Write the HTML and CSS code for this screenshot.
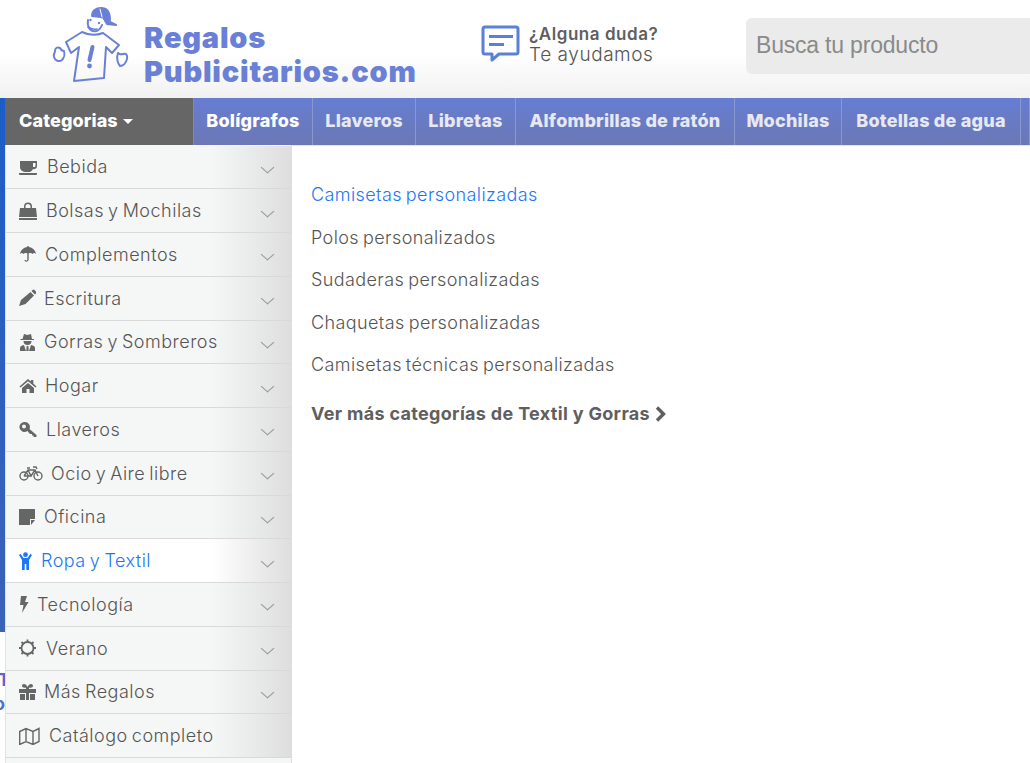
FILE: index.html
```html
<!DOCTYPE html>
<html lang="es">
<head>
<meta charset="utf-8">
<title>Regalos Publicitarios</title>
<link rel="stylesheet" href="styles.css">
</head>
<body>
<header class="top">
  <a class="logo">
    <svg class="logo-mark" width="95" height="90" viewBox="0 0 95 90" fill="none" stroke="#6a80d6" stroke-width="2" stroke-linecap="round" stroke-linejoin="round">
      <path d="M52 16c0-5 4-8 9-8 6 0 9 4 9 12l-9-3z" fill="#6a80d6"/>
      <path d="M64 19l12 6-9-1z" fill="#6a80d6"/>
      <path d="M60 9l2 8" stroke="#fff" stroke-width="1"/>
      <path d="M48 20c-1 5 1 10 5 11 4 1 7-1 9-6"/>
      <circle cx="50.500" cy="20" r="1.200" fill="#6a80d6" stroke="none"/>
      <circle cx="59" cy="23" r="1.200" fill="#6a80d6" stroke="none"/>
      <path d="M48 27q4 3 9 2" stroke-width="1.600"/>
      <path d="M26 42L42 32Q52 37 63 33L79 45 72 53 66 47 64 78 34 81 39 47 31 53Z"/>
      <path d="M52.500 47l-3 13" stroke-width="4"/>
      <circle cx="49.500" cy="66" r="2.400" fill="#6a80d6" stroke="none"/>
      <path d="M20 48c-3-1-5 0-5 3 0 2-2 3-1 6 1 4 5 5 8 3 2-2 3-6 2-9-1 0-3-1-4-3z"/>
      <path d="M78 53c2 1 3 2 5 1 3-1 5 1 4 5-1 4-4 7-7 7-2-2-4-8-2-13z"/>
    </svg>
    <span class="logo-text">Regalos<br>Publicitarios.com</span>
  </a>
  <div class="help">
    <svg width="40" height="38" viewBox="0 0 40 38" fill="none">
      <path d="M4 2h31a2 2 0 0 1 2 2v23a2 2 0 0 1-2 2H18l-7 6v-6H4a2 2 0 0 1-2-2V4a2 2 0 0 1 2-2z" stroke="#5b80d8" stroke-width="3" stroke-linejoin="round"/>
      <path d="M8 10h24v3H8zM8 18h15v3H8z" fill="#5b80d8"/>
    </svg>
    <p class="help-text"><strong>¿Alguna duda?</strong><span>Te ayudamos</span></p>
  </div>
  <div class="search">Busca tu producto</div>
</header>

<nav class="nav">
  <a class="nav-cat">Categorias <i class="caret"></i></a>
  <a class="nav-item">Bolígrafos</a>
  <a class="nav-item dim">Llaveros</a>
  <a class="nav-item dim">Libretas</a>
  <a class="nav-item dim">Alfombrillas de ratón</a>
  <a class="nav-item dim">Mochilas</a>
  <a class="nav-item dim">Botellas de agua</a>
  <a class="nav-item"></a>
</nav>

<main class="main">
  <div class="strip">
    <div class="strip-bar"></div>
    <div class="strip-peek"><span class="peek-a">TI</span><span class="peek-b">o</span></div>
  </div>
  <ul class="side">
    <li class="row"><svg class="ico" width="20" height="18" viewBox="0 0 20 18"><path d="M1 3h17v5a3 3 0 0 1-4 3 5 5 0 0 1-3 3H6a5 5 0 0 1-5-5zM14 5v4h1.500a1.500 1.500 0 0 0 1-1V5zM0 15h18v1a1 1 0 0 1-1 1H1a1 1 0 0 1-1-1z" fill-rule="evenodd"/></svg><span>Bebida</span><i class="chev"></i></li>
    <li class="row"><svg class="ico" width="19" height="18" viewBox="0 0 19 18"><path d="M1 6h4V4.500a4 4 0 0 1 8 0V6h4l1 9H0zM6.500 6h5V4.500a2.500 2.500 0 0 0-5 0zM0 16h18v2H0z" fill-rule="evenodd"/></svg><span>Bolsas y Mochilas</span><i class="chev"></i></li>
    <li class="row"><svg class="ico" width="18" height="18" viewBox="0 0 18 18"><path d="M8.300 1h1.400v1.100C13.500 2.500 16.500 5.500 17 9c-1-1.200-2.500-1.200-3.500 0-.8-1.100-2.300-1.300-3.800-.5v6a2.300 2.300 0 0 1-4.500.5h1.400c.3 1 1.700.9 1.700-.5v-6C6.800 7.700 5.300 7.900 4.500 9 3.500 7.800 2 7.800 1 9c.5-3.500 3.500-6.500 7.300-6.900z"/></svg><span>Complementos</span><i class="chev"></i></li>
    <li class="row"><svg class="ico" width="17" height="18" viewBox="0 0 17 18"><path d="M11.500 3l3.500 3.500-8.500 8.500L0 17 2 11zM12.500 2l1-1a1.400 1.400 0 0 1 2 0l1.500 1.500a1.400 1.400 0 0 1 0 2l-1 1z"/></svg><span>Escritura</span><i class="chev"></i></li>
    <li class="row"><svg class="ico" width="17" height="18" viewBox="0 0 17 18"><path d="M5 1l3.500 1 3.500-1 1 5h2v1H1.500V6h2zM4.500 8h8c0 2.500-1.500 4-4 4s-4-1.500-4-4zM1 18v-3c0-1.500 1-2.500 4-3l2 6zM16 18v-3c0-1.500-1-2.500-4-3l-2 6zM7.600 13h1.800l.3 5H7.300z"/></svg><span>Gorras y Sombreros</span><i class="chev"></i></li>
    <li class="row"><svg class="ico" width="18" height="18" viewBox="0 0 18 18"><path d="M9 2l3 2.600V3h2.300v3.600L17.500 9.500l-1 1L9 4.200 1.500 10.500l-1-1zM3 11l6-5 6 5v5h-4.500v-4h-3v4H3z"/></svg><span>Hogar</span><i class="chev"></i></li>
    <li class="row"><svg class="ico" width="19" height="18" viewBox="0 0 19 18"><path d="M6 2a5 5 0 0 1 4.500 7l7 6v2h-3v-1.500h-1.500V14h-2l-2.600-3A5 5 0 1 1 6 2zM5 4.500a2 2 0 1 0 0 4 2 2 0 0 0 0-4z" fill-rule="evenodd"/></svg><span>Llaveros</span><i class="chev"></i></li>
    <li class="row"><svg class="ico ico-line" width="24" height="18" viewBox="0 0 24 18"><circle cx="5" cy="12" r="4"/><circle cx="19" cy="12" r="4"/><path d="M5 12l4-6h7l3 6M9 6l3 6h-7M12 12l4-6M8 4h3M14 3h3l1 2" /></svg><span>Ocio y Aire libre</span><i class="chev"></i></li>
    <li class="row"><svg class="ico" width="17" height="18" viewBox="0 0 17 18"><path d="M0 1h16v10h-5v6H0zM12 12h4l-4 5z"/></svg><span>Oficina</span><i class="chev"></i></li>
    <li class="row active"><svg class="ico" width="14" height="18" viewBox="0 0 14 18"><circle cx="6.500" cy="2.700" r="2.400"/><path d="M0 3l1.500-1.200L4.500 6h4l3-4.200L13 3l-3 5v10H7.300v-6H5.700v6H3V8z"/></svg><span>Ropa y Textil</span><i class="chev"></i></li>
    <li class="row"><svg class="ico" width="10" height="18" viewBox="0 0 10 18"><path d="M2 1h6L6 7h3.500L3 18l1.500-8H1z"/></svg><span>Tecnología</span><i class="chev"></i></li>
    <li class="row"><svg class="ico ico-sun" width="19" height="18" viewBox="0 0 19 18"><circle cx="8.500" cy="9" r="6"/><path d="M8.500 0.500v2.500M8.500 15v2.500M0 9h2.500M14.500 9H17M2.500 3l2 2M14.500 3l-2 2M2.500 15l2-2M14.500 15l-2-2"/></svg><span>Verano</span><i class="chev"></i></li>
    <li class="row"><svg class="ico" width="17" height="18" viewBox="0 0 17 18"><path d="M0 6h7V4.500C5 5 3 4.500 3 3a2 2 0 0 1 2-2c1.500 0 3 1.500 3.500 3C9 2.500 10.500 1 12 1a2 2 0 0 1 2 2c0 1.500-2 2-4 1.500V6h7v4H10v7H7v-7H0zM1 11h5v6H1zM11 11h5v6h-5z"/></svg><span>Más Regalos</span><i class="chev"></i></li>
    <li class="row"><svg class="ico ico-map" width="22" height="18" viewBox="0 0 22 18"><path d="M.700 4.500L7 1.500l7 3 6-3v13l-6 3-7-3-6.300 3zM7 1.500v13M14 4.500v13"/></svg><span>Catálogo completo</span></li>
    <li class="row row-end"></li>
  </ul>
  <section class="panel">
    <a class="link current">Camisetas personalizadas</a>
    <a class="link">Polos personalizados</a>
    <a class="link">Sudaderas personalizadas</a>
    <a class="link">Chaquetas personalizadas</a>
    <a class="link">Camisetas técnicas personalizadas</a>
    <a class="more">Ver más categorías de Textil y Gorras <svg width="13" height="16" viewBox="0 0 13 16"><path d="M3 1.500L9.500 8 3 14.500" fill="none" stroke="#5f5f5f" stroke-width="3.400"/></svg></a>
  </section>
</main>
</body>
</html>
```

FILE: styles.css
```css
* { box-sizing: border-box; }
html, body { margin: 0; height: 763px; overflow: hidden; background: #fff; }
body { font-family: "Inter", "Liberation Sans", sans-serif; color: #666; }
p, ul { margin: 0; padding: 0; }
ul { list-style: none; }

.top {
  height: 98px;
  display: flex;
  align-items: flex-start;
  background: linear-gradient(#fff 55%, #f1f1f1 100%);
}
.logo { display: flex; margin-left: 40px; width: 426px; }
.logo-mark { flex: none; }
.logo-text {
  margin: 21px 0 0 9px;
  font-size: 29px;
  line-height: 34px;
  font-weight: 900;
  color: #6a80d6;
  letter-spacing: .8px;
  white-space: nowrap;
}
.help { display: flex; margin: 25px 0 0 15px; width: 265px; }
.help-text { display: flex; flex-direction: column; margin-left: 8px; margin-top: -1px; }
.help-text strong { font-size: 17px; line-height: 20px; font-weight: 600; color: #5f5f5f; letter-spacing: .55px; }
.help-text span { font-size: 19px; line-height: 22px; font-weight: 300; color: #555; letter-spacing: .55px; }
.search {
  flex: 1;
  height: 56px;
  margin-top: 18px;
  padding-left: 10px;
  border-radius: 6px 0 0 6px;
  background: #ebebeb;
  color: #8a8a8a;
  font: 23px/54px "Liberation Sans", sans-serif;
  letter-spacing: -.2px;
}

.nav {
  height: 48px;
  margin-left: 5px;
  display: grid;
  grid-template-columns: 189px 119px 103px 100px 219px 107px 179px 1fr;
  border-bottom: 1px solid #e4e6ee;
  font-size: 18px;
  line-height: 46px;
  font-weight: 800;
}
.nav-cat {
  background: #666;
  color: #fff;
  padding-left: 14px;
  border-right: 1px solid #8a8a8a;
  letter-spacing: .1px;
}
.caret {
  display: inline-block;
  margin-left: 1px;
  vertical-align: 3px;
  border: 5px solid transparent;
  border-top-color: #fff;
  border-bottom: 0;
}
.nav-item {
  background: linear-gradient(#667dd3, #6b78b5);
  border-right: 1px solid #8b98cf;
  color: #fff;
  text-align: center;
  white-space: nowrap;
  letter-spacing: .22px;
}
.nav-item.dim { color: #e6e8f2; }

.main { display: flex; margin-top: -1px; height: 618px; }
.strip { width: 5px; flex: none; margin-top: -47px; overflow: hidden; }
.strip-bar { height: 534px; background: linear-gradient(#1d5cc7, #3a63b9); }
.strip-peek { display: flex; flex-direction: column; padding-top: 36px; font-size: 18px; line-height: 24px; font-weight: 700; }
.peek-a { color: #6a60c8; margin-left: -2px; }
.peek-b { color: #4a6fd8; margin-left: -6px; }

.side {
  width: 287px;
  flex: none;
  display: flex;
  flex-direction: column;
  padding-top: .5px;
  background: #f5f7f7;
  border-left: 1px solid #e2e2e2;
  border-right: 1px solid #ddd;
}
.row {
  height: 43.750px;
  flex: none;
  display: flex;
  align-items: center;
  gap: 8px;
  padding: 0 17px 0 13px;
  border-bottom: 1px solid #d9d9d9;
  background: linear-gradient(90deg, #f5f7f7 72%, #dedede 100%);
  font-size: 18px;
  font-weight: 300;
  color: #555;
  letter-spacing: .5px;
  word-spacing: -1.500px;
  white-space: nowrap;
}
.row span { flex: 1; }
.row.active { background: linear-gradient(90deg, #fff 72%, #dedede 100%); color: #1e76f5; }
.row-end { flex: 1; height: auto; min-height: 0; border-bottom: 0; background: #f5f7f7; }
.ico { flex: none; fill: #666; }
.active .ico { fill: #1e76f5; }
.ico-line, .ico-sun, .ico-map { fill: none; stroke: #666; stroke-width: 1.400; }
.ico-sun { stroke-width: 1.800; }
.chev {
  flex: none;
  width: 9px;
  height: 9px;
  margin: 1px 2px 0 0;
  border-right: 1px solid #9a9a9a;
  border-bottom: 1px solid #9a9a9a;
  transform: rotate(45deg) skew(-4deg, -4deg);
}

.panel { flex: 1; display: flex; flex-direction: column; align-items: flex-start; padding: 29px 0 0 19px; }
.link { font-size: 18px; font-weight: 300; color: #555; line-height: 42.5px; letter-spacing: .4px; word-spacing: -1.500px; white-space: nowrap; }
.link.current { color: #1e76f5; }
.more {
  display: flex;
  align-items: center;
  gap: 4px;
  margin-top: 6px;
  font-size: 18px;
  line-height: 42px;
  font-weight: 700;
  letter-spacing: .32px;
  color: #5f5f5f;
  white-space: nowrap;
}
```
